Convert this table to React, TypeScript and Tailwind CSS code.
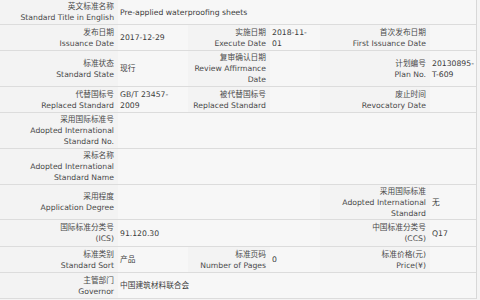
import React from "react";

type Cell = { t?: string[]; label?: boolean; span?: number };

const L = (...t: string[]): Cell => ({ t, label: true });
const V = (t: string[] = [], span = 1): Cell => ({ t, span });

const rows: { h: string; cells: Cell[] }[] = [
  { h: "h-[25px]", cells: [L("英文标准名称", "Standard Title in English"), V(["Pre-applied waterproofing sheets"], 5)] },
  {
    h: "h-[26px]",
    cells: [
      L("发布日期", "Issuance Date"),
      V(["2017-12-29"]),
      L("实施日期", "Execute Date"),
      V(["2018-11-", "01"]),
      L("首次发布日期", "First Issuance Date"),
      V(),
    ],
  },
  {
    h: "h-[36px]",
    cells: [
      L("标准状态", "Standard State"),
      V(["现行"]),
      L("复审确认日期", "Review Affirmance", "Date"),
      V(),
      L("计划编号", "Plan No."),
      V(["20130895-", "T-609"]),
    ],
  },
  {
    h: "h-[26px]",
    cells: [
      L("代替国标号", "Replaced Standard"),
      V(["GB/T 23457-", "2009"]),
      L("被代替国标号", "Replaced Standard"),
      V(),
      L("废止时间", "Revocatory Date"),
      V(),
    ],
  },
  { h: "h-[36px]", cells: [L("采用国际标准号", "Adopted International", "Standard No."), V([], 5)] },
  { h: "h-[36px]", cells: [L("采标名称", "Adopted International", "Standard Name"), V([], 5)] },
  {
    h: "h-[35px]",
    cells: [L("采用程度", "Application Degree"), V([], 3), L("采用国际标准", "Adopted International", "Standard"), V(["无"])],
  },
  {
    h: "h-[27px]",
    cells: [L("国际标准分类号", "(ICS)"), V(["91.120.30"], 3), L("中国标准分类号", "(CCS)"), V(["Q17"])],
  },
  {
    h: "h-[26px]",
    cells: [
      L("标准类别", "Standard Sort"),
      V(["产品"]),
      L("标准页码", "Number of Pages"),
      V(["0"]),
      L("标准价格(元)", "Price(¥)"),
      V(),
    ],
  },
  { h: "h-[26px]", cells: [L("主管部门", "Governor"), V(["中国建筑材料联合会"], 5)] },
];

export default function App() {
  return (
    <div
      className="w-[480px] h-[300px] overflow-hidden bg-[#f4f4f4] text-[7.7px] leading-[11px]"
      style={{ fontFamily: '"DejaVu Sans", "Noto Sans CJK SC", sans-serif' }}
    >
      <div className="w-[477px] border-r border-[#d8d8d8] grid grid-cols-[118px_70px_82px_50px_110px_46px]">
        {rows.map((r, i) =>
          r.cells.map((c, j) => (
            <div
              key={`${i}-${j}`}
              className={`${r.h} border-b border-[#dcdcdc] flex items-center ${
                c.label
                  ? "justify-end text-right pr-[4px] pl-[2px] bg-[#f3f3f3] text-[#4a4a4a]"
                  : "justify-start pl-[2px] pr-[2px] bg-[#f7f7f7] text-[#3c3c3c]"
              } ${c.span === 5 ? "col-span-5" : c.span === 3 ? "col-span-3" : ""}`}
            >
              <div>
                {(c.t || []).map((line, k) => (
                  <div key={k} className="whitespace-nowrap">
                    {line}
                  </div>
                ))}
              </div>
            </div>
          ))
        )}
      </div>
    </div>
  );
}
